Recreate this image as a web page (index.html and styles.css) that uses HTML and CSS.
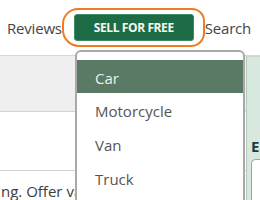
FILE: index.html
```html
<!DOCTYPE html>
<html>
<head>
<meta charset="utf-8">
<link rel="stylesheet" href="styles.css">
</head>
<body>
<div class="page">
  <header class="header">
    <span class="nav-link">Reviews</span>
    <span class="sell-btn">SELL FOR FREE</span>
    <span class="nav-link">Search</span>
  </header>
  <div class="highlight"></div>
  <main class="main">
    <div class="left">
      <div class="band"></div>
      <div class="blank"></div>
      <div class="note">ng. Offer valid for private sellers</div>
    </div>
    <div class="right">
      <div class="right-top"></div>
      <div class="panel">
        <div class="panel-label">E</div>
        <div class="panel-input"></div>
      </div>
    </div>
  </main>
  <ul class="menu">
    <li class="menu-item active">Car</li>
    <li class="menu-item">Motorcycle</li>
    <li class="menu-item">Van</li>
    <li class="menu-item">Truck</li>
  </ul>
</div>
</body>
</html>
```
FILE: styles.css
```css
html, body {
  margin: 0;
  padding: 0;
  background: #ffffff;
}
.page {
  position: relative;
  width: 260px;
  height: 200px;
  overflow: hidden;
  font-family: "Open Sans", "Noto Sans", sans-serif;
}
.header {
  height: 56px;
  box-sizing: border-box;
  border-bottom: 1px solid #d6d6d6;
  display: flex;
  align-items: center;
  padding-left: 7px;
}
.nav-link {
  font-size: 15px;
  color: #454545;
  letter-spacing: -0.2px;
}
.sell-btn {
  margin: 0 11px 0 12px;
  width: 120px;
  height: 27px;
  box-sizing: border-box;
  background: #1e6c45;
  border: 1px solid #3e8a62;
  border-radius: 3px;
  color: #f4f8f5;
  font-size: 12px;
  font-weight: 700;
  display: flex;
  align-items: center;
  justify-content: center;
  letter-spacing: -0.4px;
}
.highlight {
  position: absolute;
  left: 62px;
  top: 8px;
  width: 143px;
  height: 39px;
  box-sizing: border-box;
  border: 2.5px solid #ef7b24;
  border-radius: 16px 13px 14px 17px;
}
.main {
  display: flex;
  height: 144px;
}
.left {
  width: 246px;
  display: flex;
  flex-direction: column;
}
.band {
  height: 57px;
  background: #efefef;
  border-bottom: 1px solid #d2d2d2;
}
.blank {
  height: 61px;
  border-bottom: 1px solid #d2d2d2;
}
.note {
  width: 76px;
  overflow: hidden;
  margin-left: 1px;
  margin-top: 10px;
  font-size: 15px;
  color: #3d3d3d;
  white-space: nowrap;
}
.right {
  flex: 1;
  display: flex;
  flex-direction: column;
}
.right-top {
  height: 16px;
  background: #efefef;
}
.panel {
  flex: 1;
  background: #d7e8de;
  border-left: 1px solid #b8c8be;
  border-top: 1px solid #c9d9cf;
  padding: 81px 0 0 4px;
}
.panel-label {
  font-size: 15px;
  font-weight: 700;
  color: #1d3b3b;
  line-height: 16px;
}
.panel-input {
  margin-top: 5px;
  height: 40px;
  background: #ffffff;
  border: 1px solid #9aa9a0;
  border-right: none;
  border-radius: 5px 0 0 0;
}
.menu {
  position: absolute;
  left: 75px;
  top: 50px;
  width: 170px;
  height: 170px;
  box-sizing: border-box;
  margin: 0;
  padding: 8px 0 0 0;
  list-style: none;
  background: #ffffff;
  border: 2px solid #a9a9a9;
  border-radius: 6px 6px 0 0;
}
.menu-item {
  height: 34px;
  display: flex;
  align-items: center;
  padding-left: 18px;
  font-size: 15px;
  color: #555555;
  padding-top: 2px;
  box-sizing: border-box;
}
.menu-item.active {
  height: 33px;
  background: #5b7a66;
  color: #eaf1ec;
}
```
